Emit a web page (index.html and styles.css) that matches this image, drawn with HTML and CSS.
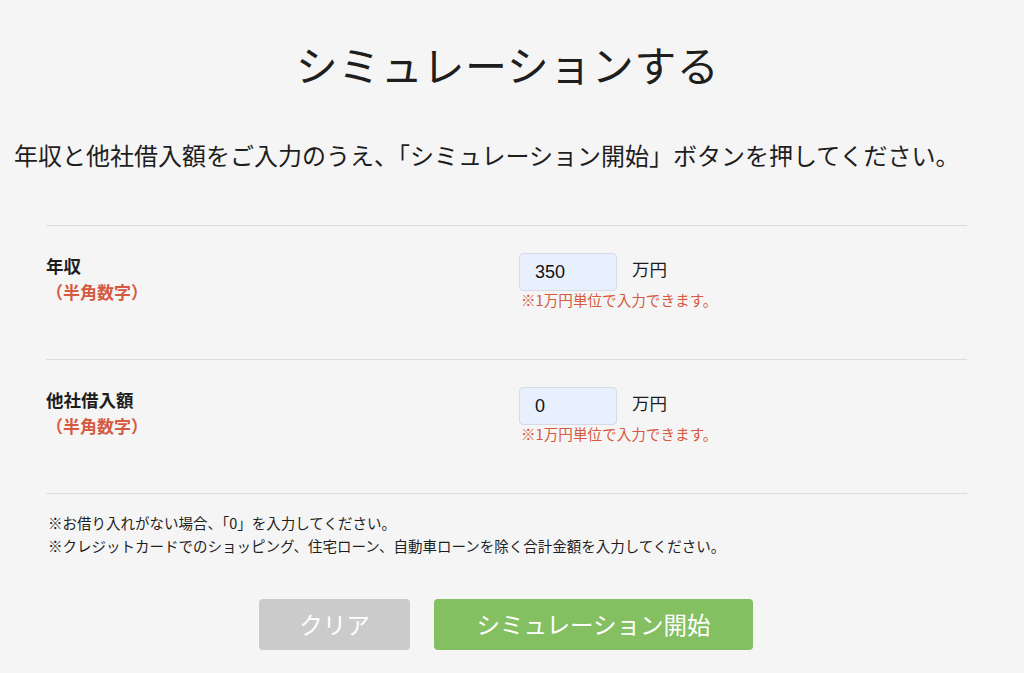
FILE: index.html
```html
<!DOCTYPE html>
<html lang="ja">
<head>
<meta charset="utf-8">
<link rel="stylesheet" href="styles.css">
</head>
<body>
<main class="page">
  <h1 class="title">シミュレーションする</h1>
  <p class="lead">年収と他社借入額をご入力のうえ、「シミュレーション開始」ボタンを押してください。</p>
  <section class="form">
    <div class="row">
      <div class="label">
        <div class="label-main">年収</div>
        <div class="label-sub">（半角数字）</div>
      </div>
      <div class="field">
        <div class="input-line">
          <input class="input" type="text" value="350">
          <span class="unit">万円</span>
        </div>
        <div class="note">※1万円単位で入力できます。</div>
      </div>
    </div>
    <div class="row">
      <div class="label">
        <div class="label-main">他社借入額</div>
        <div class="label-sub">（半角数字）</div>
      </div>
      <div class="field">
        <div class="input-line">
          <input class="input" type="text" value="0">
          <span class="unit">万円</span>
        </div>
        <div class="note">※1万円単位で入力できます。</div>
      </div>
    </div>
  </section>
  <div class="footnotes">
    <p>※お借り入れがない場合、「0」を入力してください。</p>
    <p>※クレジットカードでのショッピング、住宅ローン、自動車ローンを除く合計金額を入力してください。</p>
  </div>
  <div class="buttons">
    <button class="btn btn-clear" type="button">クリア</button>
    <button class="btn btn-start" type="button">シミュレーション開始</button>
  </div>
</main>
</body>
</html>
```
FILE: styles.css
```css
html, body {
  margin: 0;
  padding: 0;
  background: #f5f5f5;
}
body {
  font-family: "Noto Sans CJK JP", "Noto Sans", sans-serif;
  color: #222;
  width: 1024px;
  height: 673px;
  overflow: hidden;
}
.page {
  padding-top: 36px;
}
.title {
  margin: 0;
  text-align: center;
  font-size: 42px;
  font-weight: 400;
  line-height: 56px;
  padding-right: 9px;
  letter-spacing: 0.5px;
  color: #1e1e1e;
}
.lead {
  margin: 47px 0 0 14px;
  font-size: 24px;
  line-height: 32px;
  color: #1e1e1e;
}
.form {
  margin: 54px 57px 0 46px;
  border-top: 1px solid #dcdcdc;
}
.row {
  display: flex;
  height: 134px;
  box-sizing: border-box;
  padding-top: 27px;
  border-bottom: 1px solid #dcdcdc;
}
.label {
  width: 473px;
  flex: none;
}
.label-main {
  font-size: 17.5px;
  font-weight: 700;
  line-height: 26px;
  color: #1e1e1e;
}
.label-sub {
  font-size: 17px;
  font-weight: 700;
  line-height: 26px;
  color: #d65a40;
}
.field {
  display: flex;
  flex-direction: column;
}
.input-line {
  display: flex;
  align-items: center;
  gap: 15px;
}
.input {
  width: 98px;
  height: 38px;
  box-sizing: border-box;
  border: 1px solid #d6dbe3;
  border-radius: 4px;
  background: #e8f0fe;
  padding: 0 0 0 15px;
  font-family: "Liberation Sans", Arial, sans-serif;
  font-size: 18px;
  color: #111;
  outline: none;
}
.unit {
  font-size: 17.5px;
  line-height: 26px;
  color: #1e1e1e;
  margin-top: -6px;
}
.note {
  margin: 0 0 0 2px;
  font-size: 14.6px;
  line-height: 18px;
  color: #d65a40;
}
.footnotes {
  margin: 17px 0 0 48px;
}
.footnotes p {
  margin: 0;
  font-size: 14.5px;
  line-height: 23px;
  color: #1e1e1e;
}
.buttons {
  display: flex;
  gap: 24px;
  margin: 42px 0 0 259px;
}
.btn {
  height: 51px;
  border: none;
  border-radius: 4px;
  color: #fff;
  font-family: "Noto Sans CJK JP", "Noto Sans", sans-serif;
  font-size: 23.5px;
  line-height: 51px;
  padding: 0;
}
.btn-clear {
  width: 151px;
  background: #cbcbcb;
}
.btn-start {
  width: 319px;
  background: #84c062;
}
```
